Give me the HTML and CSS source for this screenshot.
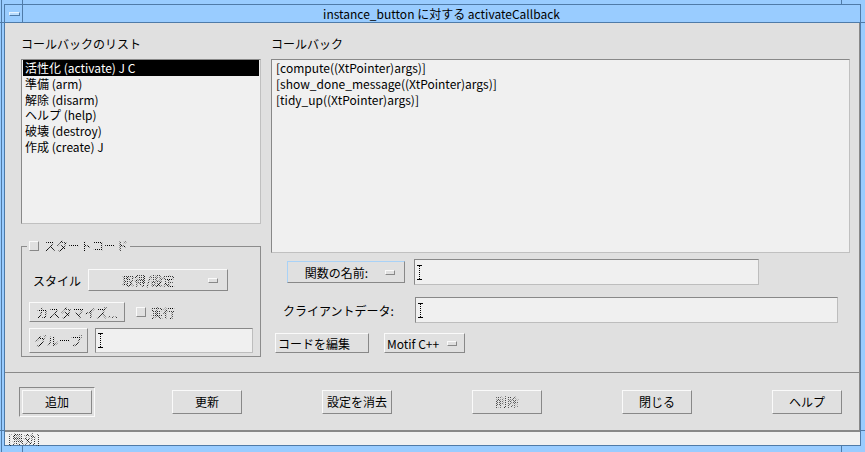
FILE: index.html
```html
<!DOCTYPE html>
<html lang="ja">
<head>
  <meta charset="UTF-8" />
  <title>instance_button に対する activateCallback</title>
  <link rel="stylesheet" href="styles.css">
</head>
<body>
  <div class="window">
    <div class="frame">
      <div class="titlebar">
        <div class="menu-btn"><span class="menu-bar"></span></div>
        <div class="title">instance_button に対する activateCallback</div>
      </div>

      <div class="dialog">
        <div class="main">
          <div class="col-left">
            <div class="label">コールバックのリスト</div>
            <ul class="list">
              <li class="selected">活性化 (activate) J C</li>
              <li>準備 (arm)</li>
              <li>解除 (disarm)</li>
              <li>ヘルプ (help)</li>
              <li>破壊 (destroy)</li>
              <li>作成 (create) J</li>
            </ul>

            <fieldset class="group">
              <legend><span class="check"></span><span class="off">スタートコード</span></legend>
              <div class="row row-style">
                <span class="row-label">スタイル</span>
                <div class="option opt-style"><span class="opt-text off">取得/設定</span><span class="ind"></span></div>
              </div>
              <div class="row row-custom">
                <div class="btn btn-custom"><span class="off">カスタマイズ...</span></div>
                <span class="check"></span><span class="off">実行</span>
              </div>
              <div class="row row-grp">
                <div class="btn btn-grp"><span class="off">グループ</span></div>
                <div class="field field-grp">
                  <svg class="ibeam" width="5" height="15" viewBox="0 0 5 15"><path d="M0 0.5h5M0 14.5h5" stroke="#000"/><path d="M2.5 1v13" stroke="#000" stroke-dasharray="1 1"/></svg>
                </div>
              </div>
            </fieldset>
          </div>

          <div class="col-right">
            <div class="label">コールバック</div>
            <div class="callbacks">
              <div>[compute((XtPointer)args)]</div>
              <div>[show_done_message((XtPointer)args)]</div>
              <div>[tidy_up((XtPointer)args)]</div>
            </div>

            <div class="row row-func">
              <div class="option opt-func"><span class="opt-text">関数の名前:</span><span class="ind"></span></div>
              <div class="field field-func">
                <svg class="ibeam" width="5" height="15" viewBox="0 0 5 15"><path d="M0 0.5h5M0 14.5h5" stroke="#000"/><path d="M2.5 1v13" stroke="#000" stroke-dasharray="1 1"/></svg>
              </div>
            </div>
            <div class="row row-client">
              <span class="client-label">クライアントデータ:</span>
              <div class="field field-client">
                <svg class="ibeam" width="5" height="15" viewBox="0 0 5 15"><path d="M0 0.5h5M0 14.5h5" stroke="#000"/><path d="M2.5 1v13" stroke="#000" stroke-dasharray="1 1"/></svg>
              </div>
            </div>
            <div class="row row-edit">
              <div class="btn btn-edit">コードを編集</div>
              <div class="option opt-lang"><span class="opt-text">Motif C++</span><span class="ind"></span></div>
            </div>
          </div>
        </div>

        <div class="separator"></div>

        <div class="actions">
          <div class="default-frame"><div class="btn action">追加</div></div>
          <div class="btn action">更新</div>
          <div class="btn action">設定を消去</div>
          <div class="btn action"><span class="off light">削除</span></div>
          <div class="btn action">閉じる</div>
          <div class="btn action">ヘルプ</div>
        </div>
      </div>

      <div class="status"><span class="off">[無効]</span></div>
    </div>
  </div>
</body>
</html>
```

FILE: styles.css
```css
* {
  box-sizing: border-box;
}

html, body {
  margin: 0;
  padding: 0;
}

body {
  font-family: "Noto Sans CJK JP", "Noto Sans", sans-serif;
  font-size: 12px;
  color: #000;
  background: #99ccff;
}

/* window manager frame, with the little resize notches */
.window {
  width: 865px;
  height: 452px;
  padding: 4px 4px 6px 4px;
  background:
    linear-gradient(#4f7ba8, #4f7ba8) 22px 0 / 1px 4px no-repeat,
    linear-gradient(#4f7ba8, #4f7ba8) 841px 0 / 1px 4px no-repeat,
    linear-gradient(#4f7ba8, #4f7ba8) 22px 446px / 1px 6px no-repeat,
    linear-gradient(#4f7ba8, #4f7ba8) 841px 446px / 1px 6px no-repeat,
    linear-gradient(#4f7ba8, #4f7ba8) 0 22px / 4px 1px no-repeat,
    linear-gradient(#4f7ba8, #4f7ba8) 0 430px / 4px 1px no-repeat,
    linear-gradient(#4f7ba8, #4f7ba8) 861px 22px / 4px 1px no-repeat,
    linear-gradient(#4f7ba8, #4f7ba8) 861px 430px / 4px 1px no-repeat,
    linear-gradient(#4f7ba8, #4f7ba8) 1px 0 / 1px 100% no-repeat,
    #99ccff;
}

.frame {
  height: 100%;
  border: 1px solid #4f7ba8;
  display: flex;
  flex-direction: column;
}

.titlebar {
  height: 18px;
  flex: none;
  display: flex;
  background: #99ccff;
  border-bottom: 1px solid #4f7ba8;
}

.menu-btn {
  width: 18px;
  border-right: 1px solid #4f7ba8;
  display: flex;
  align-items: center;
  justify-content: center;
}

.menu-bar {
  width: 11px;
  height: 4px;
  margin-left: 2px;
  border: 1px solid;
  border-color: #e6f3ff #4f7ba8 #4f7ba8 #e6f3ff;
  background: #b8dcff;
}

.title {
  flex: 1;
  text-align: center;
  line-height: 17px;
}

/* dialog body */
.dialog {
  flex: 1;
  display: flex;
  flex-direction: column;
  background: #e0e0e0;
  border-right: 1px solid #888;
  border-bottom: 2px solid #888;
}

.main {
  flex: 1;
  display: flex;
  gap: 10px;
  padding: 13px 9px 0 16px;
}

.col-left {
  width: 240px;
  flex: none;
}

.col-right {
  flex: 1;
}

.label {
  height: 15px;
  line-height: 15px;
  margin-bottom: 8px;
}

.list, .callbacks {
  margin: 0;
  list-style: none;
  background: #f0f0f0;
  border: 1px solid;
  border-color: #888 #c0c0c0 #c0c0c0 #888;
  line-height: 15.8px;
  white-space: nowrap;
}

.list {
  height: 165px;
  padding: 0 1px;
}

.list li {
  padding-left: 2px;
}

.list li.selected {
  background: #000;
  color: #fff;
}

.callbacks {
  height: 194px;
  padding: 0 4px;
}

/* start code group */
.group {
  margin: 15px 0 0 0;
  padding: 0 5px 3px 7px;
  border: 1px solid #8c8c8c;
  min-width: 0;
}

.group legend {
  display: flex;
  align-items: center;
  gap: 5px;
  height: 14px;
  line-height: 14px;
  padding: 0 2px;
  margin-left: -2px;
}

.row {
  display: flex;
  align-items: center;
}

.row-style {
  margin-top: 16px;
  height: 22px;
}

.row-label {
  width: 59px;
  padding-left: 4px;
}

.row-custom {
  margin-top: 11px;
  height: 20px;
}

.row-custom .check {
  margin: 0 5px 0 11px;
}

.row-grp {
  margin-top: 6px;
  height: 25px;
  gap: 7px;
}

.check {
  display: inline-block;
  width: 10px;
  height: 10px;
  border: 1px solid;
  border-color: #fafafa #888 #888 #fafafa;
  background: #e0e0e0;
}

/* push buttons and option menus */
.btn, .option {
  height: 100%;
  border: 1px solid;
  border-color: #fafafa #888 #888 #fafafa;
  background: #e0e0e0;
  display: flex;
  align-items: center;
  justify-content: center;
  white-space: nowrap;
}

.option {
  justify-content: flex-start;
}

.opt-text {
  flex: 1;
  text-align: center;
}

.ind {
  width: 10px;
  height: 5px;
  border: 1px solid;
  border-color: #fafafa #888 #888 #fafafa;
  flex: none;
}

.opt-style {
  width: 140px;
}

.opt-style .ind {
  margin-right: 9px;
}

.btn-custom {
  width: 96px;
}

.btn-grp {
  width: 59px;
}

.field {
  height: 100%;
  background: #f0f0f0;
  border: 1px solid;
  border-color: #888 #bdbdbd #bdbdbd #888;
  display: flex;
  align-items: center;
  padding-left: 2px;
}

.field-grp {
  width: 158px;
}

.ibeam {
  display: block;
}

/* right column rows */
.row-func {
  margin-top: 6px;
  height: 26px;
}

.opt-func {
  margin-left: 16px;
  width: 118px;
  height: 22px;
  border-color: #a9d2f7 #888 #888 #a9d2f7;
}

.opt-func .ind {
  margin-right: 9px;
}

.field-func {
  margin-left: 9px;
  width: 345px;
}

.row-client {
  margin-top: 12px;
  height: 26px;
}

.client-label {
  width: 144px;
  padding-left: 12px;
}

.field-client {
  width: 423px;
}

.row-edit {
  margin-top: 10px;
  height: 20px;
  gap: 15px;
}

.btn-edit {
  margin-left: 4px;
  width: 94px;
  justify-content: flex-start;
  padding-left: 2px;
}

.opt-lang {
  width: 81px;
}

.opt-lang .opt-text {
  text-align: left;
  padding-left: 2px;
}

.opt-lang .ind {
  margin-right: 7px;
}

/* bottom action area */
.separator {
  height: 1px;
  flex: none;
  background: #8a8a8a;
}

.actions {
  height: 57px;
  flex: none;
  display: flex;
  align-items: center;
  gap: 80px;
  padding-left: 17px;
}

.default-frame {
  margin: 0 -3px;
  padding: 2px;
  border: 1px solid;
  border-color: #888 #fafafa #fafafa #888;
}

.action {
  width: 70px;
  height: 24px;
}

.status {
  height: 13px;
  flex: none;
  background: #f0f0f0;
  padding-left: 3px;
  font-size: 12px;
  line-height: 13px;
}

/* stippled, insensitive text */
.off {
  color: transparent;
  background: repeating-conic-gradient(#000 0 25%, transparent 0 50%) 0 0 / 2px 2px;
  -webkit-background-clip: text;
  background-clip: text;
}

.off.light {
  background: repeating-conic-gradient(#333 0 25%, transparent 0 50%) 0 0 / 2px 2px;
  -webkit-background-clip: text;
  background-clip: text;
}
```
